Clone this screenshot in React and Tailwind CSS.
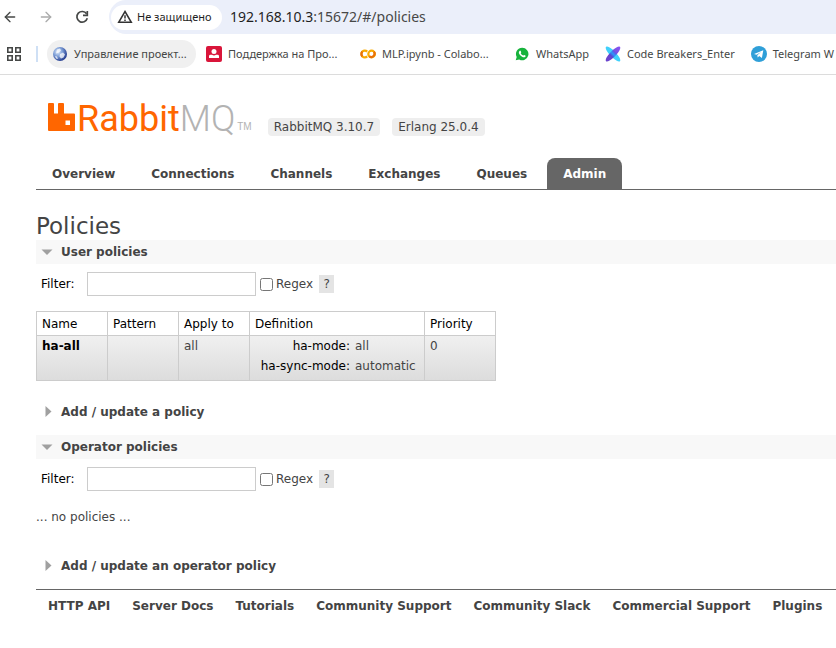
import { ArrowLeft, ArrowRight } from "lucide-react";

const tabs = ["Overview", "Connections", "Channels", "Exchanges", "Queues", "Admin"];

const footerLinks = [
  "HTTP API",
  "Server Docs",
  "Tutorials",
  "Community Support",
  "Community Slack",
  "Commercial Support",
  "Plugins",
];

function GlobeIcon() {
  return (
    <svg className="size-4 shrink-0" viewBox="0 0 16 16" aria-hidden="true">
      <defs>
        <radialGradient id="globe" cx="0.35" cy="0.35" r="0.7">
          <stop offset="0" stopColor="#dfeaf8" />
          <stop offset="0.45" stopColor="#7fa0d8" />
          <stop offset="1" stopColor="#20388c" />
        </radialGradient>
      </defs>
      <circle cx="8" cy="8" r="7" fill="url(#globe)" />
      <path d="M5 3.500l3-1 1 2-2 2-3 1zM8 8l3-1.500 2 2-1.500 3-2.500 1-1.500-2zM3 10l2 .5 1 2.500-2-.5z" fill="#fff" opacity="0.75" />
    </svg>
  );
}

function SupportIcon() {
  return (
    <svg className="size-4 shrink-0" viewBox="0 0 16 16" aria-hidden="true">
      <rect width="16" height="16" rx="2" fill="#d9153a" />
      <circle cx="8" cy="5.500" r="2.500" fill="#fff" />
      <path d="M3 12V10.200Q3 8.800 4.500 8.800H6Q8 10.300 10 8.800H11.500Q13 8.800 13 10.200V12Z" fill="#fff" />
    </svg>
  );
}

function ColabIcon() {
  return (
    <svg className="size-4 shrink-0" viewBox="0 0 16 16" fill="none" strokeWidth="2.200" aria-hidden="true">
      <path d="M7.200 5.600A3.400 3.400 0 1 0 7.200 10.400" stroke="#f9ab00" />
      <path d="M2.400 10.400A3.400 3.400 0 0 1 2.400 5.600" stroke="#e8710a" />
      <circle cx="11.600" cy="8" r="3.300" stroke="#f9ab00" />
      <path d="M9.300 10.300A3.300 3.300 0 0 0 13.900 5.700" stroke="#e8710a" />
    </svg>
  );
}

function WhatsAppIcon() {
  return (
    <svg className="size-4 shrink-0" viewBox="0 0 16 16" aria-hidden="true">
      <path d="M8.200 1.800A6.200 6.200 0 1 1 5.200 13.400L1.700 14.300 2.700 11A6.200 6.200 0 0 1 8.200 1.800Z" fill="#17b33c" />
      <path d="M5.500 4.900Q6.300 4.200 6.700 5L7.200 6.200Q7.300 6.700 6.700 7.200 7.500 8.900 9.300 9.600 9.900 8.800 10.300 9L11.600 9.700Q11.900 10 11.300 10.800 10.200 11.900 8 10.800 5.700 9.600 4.900 7.300 4.600 5.800 5.500 4.900Z" fill="#fff" />
    </svg>
  );
}

function BreakersIcon() {
  return (
    <svg className="size-4 shrink-0" viewBox="0 0 16 16" aria-hidden="true">
      <defs>
        <linearGradient id="breakers" x1="0" y1="0" x2="1" y2="0">
          <stop offset="0" stopColor="#5a2fc8" />
          <stop offset="0.35" stopColor="#5a2fc8" />
          <stop offset="0.5" stopColor="#2c8cf8" />
          <stop offset="0.65" stopColor="#6a3fe0" />
          <stop offset="1" stopColor="#7a3ff0" />
        </linearGradient>
      </defs>
      <ellipse cx="8" cy="8" rx="10" ry="3" fill="#3fd0fb" transform="rotate(46 8 8)" />
      <ellipse cx="8" cy="8" rx="10" ry="3" fill="url(#breakers)" opacity="0.9" transform="rotate(-46 8 8)" />
    </svg>
  );
}

function TelegramIcon() {
  return (
    <svg className="size-4 shrink-0" viewBox="0 0 16 16" aria-hidden="true">
      <circle cx="8" cy="8" r="8" fill="#2f9fd8" />
      <path d="M3 7.900L12.300 4.200 10.900 12 8.200 10.100 6.700 11.500 6.300 9.300 10.100 6 5.500 8.800Z" fill="#fff" />
    </svg>
  );
}

const bookmarks = [
  { icon: SupportIcon, label: "Поддержка на Про...", truncated: true },
  { icon: ColabIcon, label: "MLP.ipynb - Colabo...", truncated: true },
  { icon: WhatsAppIcon, label: "WhatsApp" },
  { icon: BreakersIcon, label: "Code Breakers_Enter" },
  { icon: TelegramIcon, label: "Telegram W" },
];

function BrowserBar() {
  return (
    <header className="border-b border-[#dcdcdc] font-['Noto_Sans','Open_Sans',sans-serif] text-[#454746]">
      <div className="flex h-[34px] items-center">
        <div className="flex w-[109px] shrink-0 items-center gap-5 pl-[2px]">
          <button aria-label="Back"><ArrowLeft size={16} strokeWidth={2} /></button>
          <button aria-label="Forward" className="text-[#aaabab]"><ArrowRight size={16} strokeWidth={2} /></button>
          <button aria-label="Reload">
            <svg className="size-4" viewBox="0 0 16 16" fill="none" stroke="currentColor" strokeWidth="1.700" aria-hidden="true">
              <path d="M12.600 4.800A5.300 5.300 0 1 0 13.300 9.300" />
              <path d="M13.300 2v4.300H9" />
            </svg>
          </button>
        </div>
        <div className="flex h-[34px] flex-1 items-center gap-2 rounded-l-full bg-[#ebeffa] pl-[2px]">
          <button className="flex h-[25px] w-[111px] shrink-0 items-center gap-1 rounded-full bg-white pl-[6px] text-[11px] whitespace-nowrap text-[#1f1f1f]">
            <svg className="size-4 shrink-0" viewBox="0 0 16 16" fill="none" stroke="#333" strokeWidth="1.500" aria-hidden="true">
              <path d="M8 2.500L14.300 13.300H1.700Z" />
              <path d="M8 6.200v3.300M8 10.500v1.500" />
            </svg>
            Не защищено
          </button>
          <div className="text-sm whitespace-nowrap text-[#1f1f1f]">
            192.168.10.3<span className="text-[#474747]">:15672/#/policies</span>
          </div>
        </div>
      </div>
      <nav className="flex h-10 items-center overflow-hidden text-[11px] whitespace-nowrap" aria-label="Bookmarks">
        <button aria-label="Apps" className="ml-[6px] shrink-0">
          <svg className="size-4" viewBox="0 0 16 16" fill="none" stroke="currentColor" strokeWidth="1.600" aria-hidden="true">
            <path d="M1.800 1.800h4.400v4.400H1.800zM9.800 1.800h4.400v4.400H9.800zM1.800 9.800h4.400v4.400H1.800zM9.800 9.800h4.400v4.400H9.800z" />
          </svg>
        </button>
        <span className="mx-[9px] ml-[14px] h-4 w-[2px] shrink-0 bg-[#cfe0f5]" />
        <a href="#" className="flex h-7 w-[149px] shrink-0 items-center gap-[6px] rounded-full bg-[#f0f0f0] pl-[5px]">
          <GlobeIcon />
          Управление проект...
        </a>
        <div className="ml-[10px] flex gap-4">
          {bookmarks.map(({ icon: Icon, label, truncated }) => (
            <a
              key={label}
              href="#"
              className={
                truncated
                  ? "flex w-[138px] shrink-0 items-center gap-[6px]"
                  : "flex shrink-0 items-center gap-[6px]"
              }
            >
              <Icon />
              {label}
            </a>
          ))}
        </div>
      </nav>
    </header>
  );
}

function Logo() {
  return (
    <a href="#" className="mb-px flex items-end" aria-label="RabbitMQ">
      <svg className="mb-1 h-7 w-[27px]" viewBox="0 0 27 28" aria-hidden="true">
        <path d="M1 0H5Q6 0 6 1V10.500H10V1Q10 0 11 0H15Q16 0 16 1V10.500H26Q27 10.500 27 11.500V27Q27 28 26 28H1Q0 28 0 27V1Q0 0 1 0ZM17.500 17.500V22H22V17.500Z" fill="#f60" fillRule="evenodd" />
      </svg>
      <span className="ml-[2px] font-[Roboto,sans-serif] text-4xl leading-8 text-[#f60]">
        Rabbit<span className="font-light text-[#b3b3b3]">MQ</span>
      </span>
      <span className="ml-[2px] font-['Liberation_Sans',sans-serif] text-[10px] leading-4 text-[#b3b3b3]">TM</span>
    </a>
  );
}

function SectionHeading({ open, children }) {
  return (
    <h2 className={open ? "bg-[#f8f8f8]" : ""}>
      <button className="flex h-6 w-full items-center gap-2 pl-[5px] text-xs font-bold">
        <svg className="size-3" viewBox="0 0 12 12" fill="#a0a0a0" aria-hidden="true">
          <path d={open ? "M0.500 3.500H11.500L6 9Z" : "M4.500 0V11L10.500 5.500Z"} />
        </svg>
        {children}
      </button>
    </h2>
  );
}

function Filter({ id }) {
  return (
    <div className="mt-2 flex h-6 items-center pl-[5px]">
      <label htmlFor={id} className="w-[46px] text-black">Filter:</label>
      <input id={id} type="text" className="h-6 w-[169px] border border-[#ccc] bg-white px-1" />
      <input id={`${id}-regex`} type="checkbox" className="ml-1 size-[13px]" />
      <label htmlFor={`${id}-regex`} className="ml-[3px]">Regex</label>
      <button className="ml-[6px] h-[18px] w-[15px] bg-[#e4e4e4] text-center text-[#444]">?</button>
    </div>
  );
}

function PolicyTable() {
  const head = "h-6 border border-[#ccc] px-[5px] text-left font-normal text-black";
  const cell = "border border-[#ccc] px-[5px] pt-[2px] align-top";
  return (
    <table className="mt-[15px] w-[460px] table-fixed border-collapse">
      <colgroup>
        <col className="w-[71px]" />
        <col className="w-[71px]" />
        <col className="w-[71px]" />
        <col className="w-[175px]" />
        <col />
      </colgroup>
      <thead>
        <tr>
          {["Name", "Pattern", "Apply to", "Definition", "Priority"].map((name) => (
            <th key={name} scope="col" className={head}>{name}</th>
          ))}
        </tr>
      </thead>
      <tbody>
        <tr className="h-[45px] bg-linear-to-b from-[#f0f0f0] to-[#dcdcdc]">
          <td className={cell}><a href="#" className="font-bold text-black">ha-all</a></td>
          <td className={cell} />
          <td className={cell}>all</td>
          <td className={cell}>
            <dl className="-mt-[2px] grid grid-cols-[95px_1fr] gap-x-[5px] leading-5 whitespace-nowrap">
              <dt className="text-right text-black">ha-mode:</dt>
              <dd>all</dd>
              <dt className="text-right text-black">ha-sync-mode:</dt>
              <dd>automatic</dd>
            </dl>
          </td>
          <td className={cell}>0</td>
        </tr>
      </tbody>
    </table>
  );
}

export default function App() {
  return (
    <div className="overflow-hidden bg-white">
      <BrowserBar />
      <div className="pl-9 font-['DejaVu_Sans',Verdana,sans-serif] text-xs text-[#444]">
        <div className="flex items-end gap-4 pt-7 pl-3">
          <Logo />
          <div className="flex gap-3 leading-[18px]">
            <span className="rounded bg-[#eee] px-[6px]">RabbitMQ 3.10.7</span>
            <span className="rounded bg-[#eee] px-[6px]">Erlang 25.0.4</span>
          </div>
        </div>
        <nav className="mt-[22px] flex gap-1 border-b border-[#666] font-bold whitespace-nowrap" aria-label="Main">
          {tabs.map((tab) => (
            <a
              key={tab}
              href="#"
              className={
                tab === "Admin"
                  ? "rounded-t-lg bg-[#666] px-4 pt-px leading-[30px] text-white"
                  : "px-4 pt-px leading-[30px]"
              }
            >
              {tab}
            </a>
          ))}
        </nav>
        <main>
          <h1 className="mt-[22px] text-[23px] leading-7">Policies</h1>
          <section>
            <SectionHeading open>User policies</SectionHeading>
            <Filter id="user-filter" />
            <PolicyTable />
            <div className="mt-[19px]"><SectionHeading>Add / update a policy</SectionHeading></div>
          </section>
          <section className="mt-[11px]">
            <SectionHeading open>Operator policies</SectionHeading>
            <Filter id="operator-filter" />
            <p className="mt-4 leading-5">... no policies ...</p>
            <div className="mt-[27px]"><SectionHeading>Add / update an operator policy</SectionHeading></div>
          </section>
        </main>
        <footer className="mt-[11px] flex gap-[22px] border-t border-[#666] pl-3 font-bold whitespace-nowrap">
          {footerLinks.map((link) => (
            <a key={link} href="#" className="leading-8">{link}</a>
          ))}
        </footer>
      </div>
    </div>
  );
}
